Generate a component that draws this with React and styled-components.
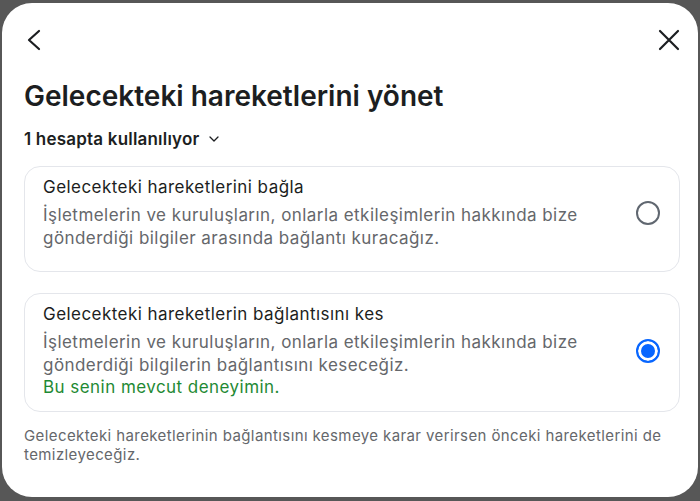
import styled, { createGlobalStyle } from "styled-components";

const Global = createGlobalStyle`
  html, body {
    margin: 0;
    padding: 0;
    background: #575757;
    height: 100%;
  }
  #root {
    height: 100%;
  }
  * {
    box-sizing: border-box;
  }
`;

export default function App() {
  return (
    <>
      <Global />
      <Backdrop>
        <Modal>
          <TopBar>
            <IconButton aria-label="Geri">
              <svg width="24" height="24" viewBox="0 0 24 24" fill="none">
                <path
                  d="M15 3 L5 12 L15 21"
                  stroke="#1c1e21"
                  strokeWidth="2.2"
                  strokeLinecap="round"
                  strokeLinejoin="round"
                />
              </svg>
            </IconButton>
            <IconButton aria-label="Kapat">
              <svg width="22" height="22" viewBox="0 0 22 22" fill="none">
                <path
                  d="M2 2 L20 20 M20 2 L2 20"
                  stroke="#1c1e21"
                  strokeWidth="2.2"
                  strokeLinecap="round"
                />
              </svg>
            </IconButton>
          </TopBar>

          <Title>Gelecekteki hareketlerini yönet</Title>
          <AccountRow>
            1 hesapta kullanılıyor
            <svg width="12" height="12" viewBox="0 0 12 12" fill="none">
              <path
                d="M2 4 L6 8 L10 4"
                stroke="#1c1e21"
                strokeWidth="1.3"
                strokeLinecap="round"
                strokeLinejoin="round"
              />
            </svg>
          </AccountRow>

          <Options>
            <Card $bottom={21}>
              <CardText>
                <CardTitle>Gelecekteki hareketlerini bağla</CardTitle>
                <CardDesc>
                  İşletmelerin ve kuruluşların, onlarla etkileşimlerin hakkında
                  bize gönderdiği bilgiler arasında bağlantı kuracağız.
                </CardDesc>
              </CardText>
              <Radio $checked={false} />
            </Card>

            <Card $bottom={13}>
              <CardText>
                <CardTitle>Gelecekteki hareketlerin bağlantısını kes</CardTitle>
                <CardDesc>
                  İşletmelerin ve kuruluşların, onlarla etkileşimlerin hakkında
                  bize gönderdiği bilgilerin bağlantısını keseceğiz.
                </CardDesc>
                <Current>Bu senin mevcut deneyimin.</Current>
              </CardText>
              <Radio $checked={true} />
            </Card>
          </Options>

          <Footnote>
            Gelecekteki hareketlerinin bağlantısını kesmeye karar verirsen
            önceki hareketlerini de temizleyeceğiz.
          </Footnote>
        </Modal>
      </Backdrop>
    </>
  );
}

const Backdrop = styled.div`
  height: 501px;
  padding: 3px 2px 4px 2px;
  display: flex;
`;

const Modal = styled.div`
  flex: 1;
  background: #ffffff;
  border-radius: 30px;
  padding: 25px 18px 0 22px;
  font-family: Inter, Roboto, "Liberation Sans", Arial, sans-serif;
  color: #1c1e21;
  display: flex;
  flex-direction: column;
`;

const TopBar = styled.div`
  display: flex;
  justify-content: space-between;
  align-items: center;
  height: 24px;
`;

const IconButton = styled.button`
  border: none;
  background: none;
  padding: 0;
  height: 24px;
  display: flex;
  align-items: center;
  justify-content: center;
  cursor: pointer;
`;

const Title = styled.h1`
  margin: 27px 0 0 0;
  font-size: 28px;
  font-weight: 600;
  line-height: 34px;
  letter-spacing: 0;
`;

const AccountRow = styled.div`
  margin-top: 15px;
  display: flex;
  align-items: center;
  gap: 9px;
  font-size: 17px;
  font-weight: 600;
  line-height: 22px;
  letter-spacing: 0.2px;
`;

const Options = styled.div`
  margin-top: 16px;
  display: flex;
  flex-direction: column;
  gap: 21px;
`;

const Card = styled.div`
  border: 1px solid #e4e6eb;
  border-radius: 16px;
  padding: 9px 19px ${(p) => p.$bottom}px 18px;
  display: flex;
  align-items: center;
  gap: 24px;
  letter-spacing: 0.45px;
`;

const CardText = styled.div`
  flex: 1;
`;

const CardTitle = styled.div`
  font-size: 17px;
  line-height: 22px;
  color: #1c1e21;
`;

const CardDesc = styled.div`
  font-size: 17px;
  line-height: 23px;
  color: #65676b;
  margin-top: 6px;
`;

const Current = styled.div`
  font-size: 17px;
  line-height: 21px;
  color: #1f8a34;
`;

const Radio = styled.span`
  width: 24px;
  height: 24px;
  border-radius: 50%;
  flex-shrink: 0;
  border: 2px solid ${(p) => (p.$checked ? "#0866ff" : "#606770")};
  box-shadow: ${(p) => (p.$checked ? "inset 0 0 0 3px #fff" : "none")};
  background: ${(p) => (p.$checked ? "#0866ff" : "#fff")};
`;

const Footnote = styled.p`
  margin: 14px 0 0 0;
  font-size: 15px;
  line-height: 19px;
  letter-spacing: 0.4px;
  color: #65676b;
`;
